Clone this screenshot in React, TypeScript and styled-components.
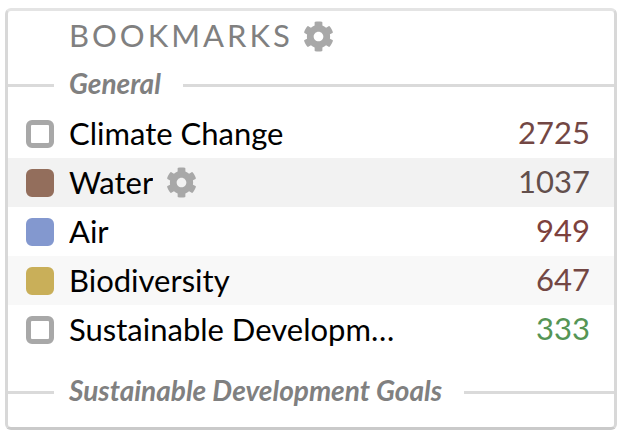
import React, { useState } from "react";
import styled, { createGlobalStyle } from "styled-components";
import { FaCog } from "react-icons/fa";

const GlobalStyle = createGlobalStyle`
  *, *::before, *::after { box-sizing: border-box; }
  body {
    margin: 0;
    background: #ffffff;
    color: #000000;
    font-family: "Lato", "Liberation Sans", sans-serif;
    font-size: 31px;
  }
`;

const Card = styled.section`
  margin: 8px 9px 4px 5px;
  border: 3px solid #d8d8d8;
  border-top-color: #e4e4e4;
  border-bottom-color: #cacaca;
  border-radius: 6px;
  background: #ffffff;
`;

const Header = styled.header`
  display: flex;
  align-items: center;
  gap: 10px;
  height: 50px;
  padding: 0 24px 0 61px;
`;

const Title = styled.h1`
  margin: 0;
  padding-bottom: 2px;
  color: #808080;
  font-size: 31px;
  font-weight: 400;
  line-height: 44px;
  letter-spacing: 3px;
`;

const IconButton = styled.button`
  display: flex;
  flex: none;
  padding: 0;
  border: 0;
  background: none;
  color: #a8a8a8;
  font-size: 31px;
  cursor: pointer;
`;

const GroupHeading = styled.h2<{ $spaced?: boolean }>`
  display: flex;
  align-items: center;
  margin: 0;
  padding: ${(p) => (p.$spaced ? "14px 0 11px" : "0")};
  color: #808080;
  font-size: 28px;
  font-style: italic;
  font-weight: 700;
  line-height: 44px;
  white-space: nowrap;

  &::before,
  &::after {
    content: "";
    height: 3px;
    background: #dadada;
  }
  &::before {
    width: 46px;
    margin-right: 15px;
  }
  &::after {
    flex: 1;
    margin-left: 22px;
  }
`;

const GroupName = styled.span`
  padding-bottom: 4px;
`;

const List = styled.ul`
  margin: 0;
  padding: 0;
  list-style: none;
`;

const Row = styled.li<{ $background: string }>`
  display: flex;
  align-items: center;
  height: 49px;
  padding: 0 24px 0 18px;
  background: ${(p) => p.$background};
`;

const Swatch = styled.input<{ $color: string }>`
  appearance: none;
  flex: none;
  width: 28px;
  height: 28px;
  margin: 0 15px 0 0;
  border: 5px solid #a8a8a8;
  border-radius: 6px;
  background: #ffffff;
  cursor: pointer;

  &:checked {
    border-color: ${(p) => p.$color};
    background: ${(p) => p.$color};
  }
`;

const NameCell = styled.div`
  display: flex;
  flex: 1;
  align-items: center;
  gap: 13px;
  min-width: 0;
  margin-right: 106px;
`;

const Name = styled.label`
  overflow: hidden;
  padding-bottom: 2px;
  line-height: 44px;
  text-overflow: ellipsis;
  white-space: nowrap;
  cursor: pointer;
`;

const Count = styled.span<{ $color: string }>`
  width: 80px;
  padding-bottom: 4px;
  color: ${(p) => p.$color};
  line-height: 44px;
  text-align: right;
`;

type Bookmark = {
  id: string;
  name: string;
  count: number;
  countColor: string;
  swatch: string;
  background: string;
  checked: boolean;
  editable?: boolean;
};

const bookmarks: Bookmark[] = [
  { id: "climate", name: "Climate Change", count: 2725, countColor: "#734744", swatch: "#6b9a72", background: "#ffffff", checked: false },
  { id: "water", name: "Water", count: 1037, countColor: "#624f4c", swatch: "#936e5c", background: "#f2f2f2", checked: true, editable: true },
  { id: "air", name: "Air", count: 949, countColor: "#7d413d", swatch: "#8398cf", background: "#ffffff", checked: true },
  { id: "biodiversity", name: "Biodiversity", count: 647, countColor: "#734744", swatch: "#c9af59", background: "#f8f8f8", checked: true },
  { id: "sustainable", name: "Sustainable Development", count: 333, countColor: "#559555", swatch: "#9a7bb0", background: "#ffffff", checked: false },
];

function BookmarkRow({ item }: { item: Bookmark }) {
  const [checked, setChecked] = useState(item.checked);
  return (
    <Row $background={item.background}>
      <Swatch
        id={item.id}
        type="checkbox"
        $color={item.swatch}
        checked={checked}
        onChange={(e) => setChecked(e.target.checked)}
      />
      <NameCell>
        <Name htmlFor={item.id}>{item.name}</Name>
        {item.editable && (
          <IconButton type="button" aria-label={`${item.name} settings`}>
            <FaCog />
          </IconButton>
        )}
      </NameCell>
      <Count $color={item.countColor}>{item.count}</Count>
    </Row>
  );
}

export default function App() {
  return (
    <>
      <GlobalStyle />
      <Card>
        <Header>
          <Title>BOOKMARKS</Title>
          <IconButton type="button" aria-label="Bookmark settings">
            <FaCog />
          </IconButton>
        </Header>
        <GroupHeading>
          <GroupName>General</GroupName>
        </GroupHeading>
        <List>
          {bookmarks.map((item) => (
            <BookmarkRow key={item.id} item={item} />
          ))}
        </List>
        <GroupHeading $spaced>
          <GroupName>Sustainable Development Goals</GroupName>
        </GroupHeading>
      </Card>
    </>
  );
}
